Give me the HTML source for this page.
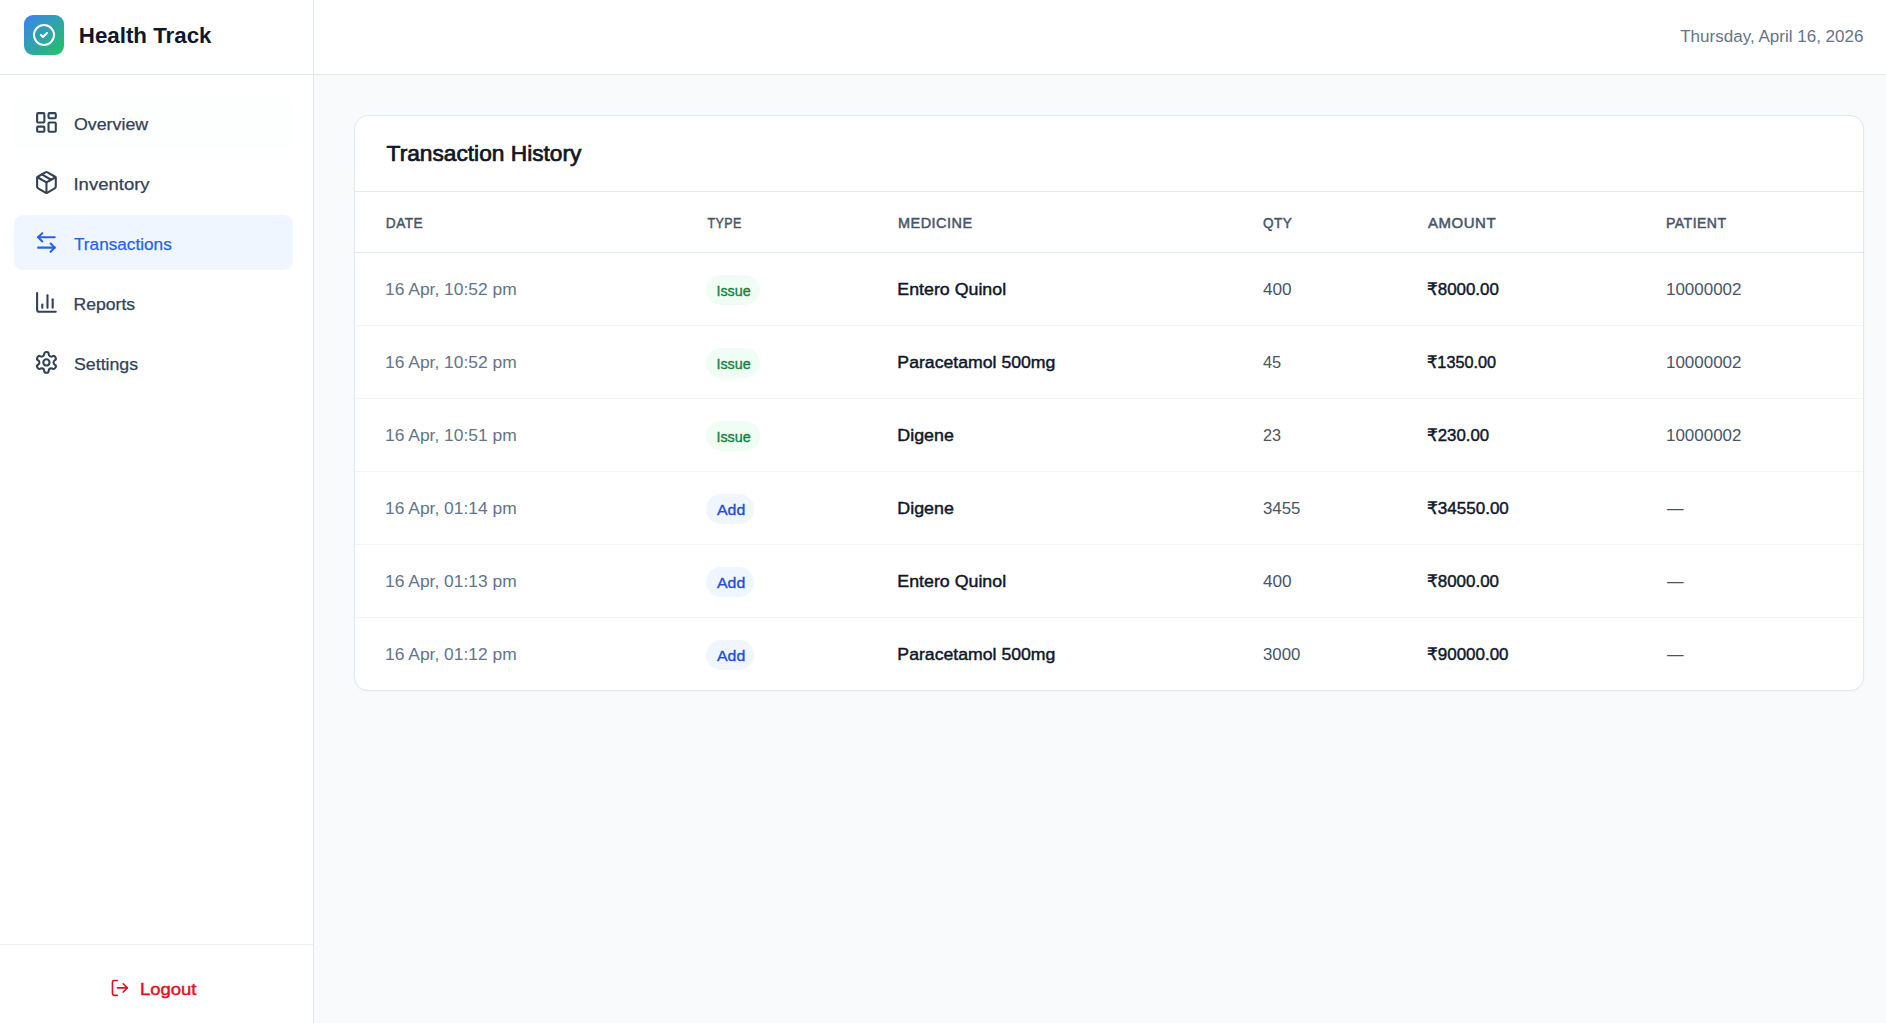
<!DOCTYPE html>
<html lang="en">
<head>
<meta charset="utf-8">
<title>Health Track</title>
<style>
*{box-sizing:border-box;margin:0;padding:0}
html,body{width:1886px;height:1023px;overflow:hidden}
body{font-family:"Liberation Sans","DejaVu Sans",sans-serif;background:#f8fafc;color:#0f172a;position:relative}
.t{display:inline-block;position:relative;white-space:nowrap;transform-origin:0 50%}
.sidebar{position:absolute;left:0;top:0;width:314px;height:1023px;background:#fff;border-right:1px solid #e2e8f0}
.brand{position:absolute;left:0;top:0;width:313px;height:75px;border-bottom:1px solid #e2e8f0}
.logo{position:absolute;left:24px;top:15px;width:40px;height:40px;border-radius:9px;background:linear-gradient(135deg,#3b82f6 0%,#22c55e 100%)}
.logo svg{position:absolute;left:8px;top:8px;width:24px;height:24px;color:#fff}
.brand-name{position:absolute;left:80px;top:15px;height:40px;line-height:40px;font-size:22.4px;font-weight:700;color:#0f172a;white-space:nowrap}
.nav-item{position:absolute;left:14px;width:279px;height:54px;border-radius:9px;color:#334155}
.nav-item svg{position:absolute;left:20.4px;top:14.4px;width:24.9px;height:24.9px}
.nav-item .lbl{position:absolute;left:60px;top:0;height:54px;line-height:54px;font-size:17.2px;white-space:nowrap;-webkit-text-stroke:0.25px currentColor}
.nav-item.hov{background:#fdfefe}
.nav-item.active{background:#eff6ff;color:#2563eb}
.logout-wrap{position:absolute;left:0;top:944px;width:313px;height:79px;border-top:1px solid #eceef2}
.logout{position:absolute;left:110.4px;top:33px;height:24px;color:#e3101f}
.logout svg{position:absolute;left:0;top:-0.3px;width:19.8px;height:19.8px}
.logout .lbl{position:absolute;left:29.9px;top:0;line-height:22px;font-size:17.2px;white-space:nowrap;-webkit-text-stroke:0.45px currentColor}
.topbar{position:absolute;left:314px;top:0;width:1572px;height:75px;background:#fff;border-bottom:1px solid #e2e8f0}
.today{position:absolute;right:22px;top:0;height:72px;line-height:72px;font-size:17.2px;color:#64748b;white-space:nowrap}
.card{position:absolute;left:354px;top:115px;width:1510px;height:576px;background:#fff;border:1px solid #e3e7ee;border-radius:14px;overflow:hidden;box-shadow:0 1px 2px rgba(15,23,42,.03)}
.card-head{height:76px;border-bottom:1px solid #e2e8f0;padding-left:30px;line-height:76px;font-size:21.5px;font-weight:400;-webkit-text-stroke:0.7px currentColor;color:#0f172a;white-space:nowrap}
table{border-collapse:separate;border-spacing:0;width:1508px;table-layout:fixed}
th{height:61px;text-align:left;padding-left:30px;font-size:15px;font-weight:400;-webkit-text-stroke:0.5px currentColor;color:#475569;border-bottom:1px solid #e2e8f0;text-transform:uppercase;white-space:nowrap;letter-spacing:.5px}
td{height:73px;padding-left:30px;font-size:17.2px;border-bottom:1px solid #f1f5f9;white-space:nowrap}
tr:last-child td{border-bottom:1px solid transparent}
td.d{color:#64748b}
td.q,td.p{color:#475569}
td.m,td.a{font-weight:400;color:#0f172a;-webkit-text-stroke:0.45px currentColor}
.badge{display:inline-block;height:30px;line-height:30px;border-radius:15px;padding:0 0 0 11px;width:54.2px;font-size:15px;font-weight:400;-webkit-text-stroke:0.35px currentColor;position:relative;top:1px}
.issue{background:#f0fdf4;color:#15803d}
.add{background:#eff6ff;color:#1d4ed8;width:47.6px}
</style>
</head>
<body>
<div class="sidebar">
  <div class="brand"><div class="logo"><svg viewBox="0 0 24 24" fill="none" stroke="currentColor" stroke-width="2" stroke-linecap="round" stroke-linejoin="round"><circle cx="12" cy="12" r="10"/><path d="m9 12 2 2 4-4"/></svg></div><div class="brand-name"><span class="t" id="brand" style="transform:translate(-1.17px,0.60px) scaleX(0.9962)">Health Track</span></div></div>
  <div class="nav-item hov" style="top:96px"><svg viewBox="0 0 24 24" fill="none" stroke="currentColor" stroke-width="2" stroke-linecap="round" stroke-linejoin="round"><rect width="7" height="9" x="3" y="3" rx="1"/><rect width="7" height="5" x="14" y="3" rx="1"/><rect width="7" height="9" x="14" y="12" rx="1"/><rect width="7" height="5" x="3" y="16" rx="1"/></svg><span class="lbl" style=""><span class="t" id="nav-overview" style="transform:translate(0.00px,1.00px) scaleX(1.0347)">Overview</span></span></div>
  <div class="nav-item" style="top:156px"><svg viewBox="0 0 24 24" fill="none" stroke="currentColor" stroke-width="2" stroke-linecap="round" stroke-linejoin="round"><path d="m7.5 4.27 9 5.15"/><path d="M21 8a2 2 0 0 0-1-1.73l-7-4a2 2 0 0 0-2 0l-7 4A2 2 0 0 0 3 8v8a2 2 0 0 0 1 1.73l7 4a2 2 0 0 0 2 0l7-4A2 2 0 0 0 21 16Z"/><path d="m3.3 7 8.7 5 8.7-5"/><path d="M12 22V12"/></svg><span class="lbl" style=""><span class="t" id="nav-inventory" style="transform:translate(-0.54px,0.92px) scaleX(1.0773)">Inventory</span></span></div>
  <div class="nav-item active" style="top:215px;height:55px"><svg viewBox="0 0 24 24" fill="none" stroke="currentColor" stroke-width="2" stroke-linecap="round" stroke-linejoin="round" style='top:15.4px'><path d="M8 3 4 7l4 4"/><path d="M4 7h16"/><path d="m16 21 4-4-4-4"/><path d="M20 17H4"/></svg><span class="lbl" style="top:1px;"><span class="t" id="nav-transactions" style="transform:translate(0.00px,0.97px) scaleX(1.0000)">Transactions</span></span></div>
  <div class="nav-item" style="top:276px"><svg viewBox="0 0 24 24" fill="none" stroke="currentColor" stroke-width="2" stroke-linecap="round" stroke-linejoin="round"><path d="M3 3v16a2 2 0 0 0 2 2h16"/><path d="M18 17V9"/><path d="M13 17V5"/><path d="M8 17v-3"/></svg><span class="lbl" style=""><span class="t" id="nav-reports" style="transform:translate(-0.54px,0.98px) scaleX(1.0239)">Reports</span></span></div>
  <div class="nav-item" style="top:336px"><svg viewBox="0 0 24 24" fill="none" stroke="currentColor" stroke-width="2" stroke-linecap="round" stroke-linejoin="round"><path d="M12.22 2h-.44a2 2 0 0 0-2 2v.18a2 2 0 0 1-1 1.73l-.43.25a2 2 0 0 1-2 0l-.15-.08a2 2 0 0 0-2.73.73l-.22.38a2 2 0 0 0 .73 2.73l.15.1a2 2 0 0 1 1 1.72v.51a2 2 0 0 1-1 1.74l-.15.09a2 2 0 0 0-.73 2.73l.22.38a2 2 0 0 0 2.73.73l.15-.08a2 2 0 0 1 2 0l.43.25a2 2 0 0 1 1 1.73V20a2 2 0 0 0 2 2h.44a2 2 0 0 0 2-2v-.18a2 2 0 0 1 1-1.73l.43-.25a2 2 0 0 1 2 0l.15.08a2 2 0 0 0 2.73-.73l.22-.39a2 2 0 0 0-.73-2.73l-.15-.08a2 2 0 0 1-1-1.74v-.5a2 2 0 0 1 1-1.74l.15-.09a2 2 0 0 0 .73-2.73l-.22-.38a2 2 0 0 0-2.73-.73l-.15.08a2 2 0 0 1-2 0l-.43-.25a2 2 0 0 1-1-1.73V4a2 2 0 0 0-2-2z"/><circle cx="12" cy="12" r="3"/></svg><span class="lbl" style=""><span class="t" id="nav-settings" style="transform:translate(0.00px,1.01px) scaleX(1.0323)">Settings</span></span></div>
  <div class="logout-wrap"><div class="logout"><svg viewBox="0 0 24 24" fill="none" stroke="currentColor" stroke-width="2" stroke-linecap="round" stroke-linejoin="round"><path d="M9 21H5a2 2 0 0 1-2-2V5a2 2 0 0 1 2-2h4"/><polyline points="16 17 21 12 16 7"/><line x1="21" x2="9" y1="12" y2="12"/></svg><span class="lbl"><span class="t" id="logout" style="transform:translate(0.00px,-0.12px) scaleX(1.0731)">Logout</span></span></div></div>
</div>
<div class="topbar"><div class="today"><span class="t" id="today" style="transform-origin:100% 50%;transform:translate(-0.54px,-0.50px) scaleX(0.9908)">Thursday, April 16, 2026</span></div></div>
<div class="card">
  <div class="card-head"><span class="t" id="title" style="transform:translate(1.62px,0.42px) scaleX(1.0562)">Transaction History</span></div>
  <table>
    <colgroup><col style="width:321px"><col style="width:192px"><col style="width:365px"><col style="width:164px"><col style="width:239px"><col style="width:227px"></colgroup>
    <thead><tr><th><span class="t" id="th-date" style="transform:translate(0.81px,-0.30px) scaleX(0.9125)">Date</span></th><th><span class="t" id="th-type" style="transform:translate(1.44px,-0.30px) scaleX(0.8306)">Type</span></th><th><span class="t" id="th-medicine" style="transform:translate(0.00px,-0.30px) scaleX(0.9636)">Medicine</span></th><th><span class="t" id="th-qty" style="transform:translate(0.00px,-0.30px) scaleX(0.9031)">Qty</span></th><th><span class="t" id="th-amount" style="transform:translate(1.08px,-0.30px) scaleX(1.0000)">Amount</span></th><th><span class="t" id="th-patient" style="transform:translate(0.00px,-0.30px) scaleX(0.9369)">Patient</span></th></tr></thead>
    <tbody>
      <tr><td class="d"><span class="t" id="d0" style="transform:translate(0.00px,0.37px) scaleX(1.0140)">16 Apr, 10:52 pm</span></td><td><span class="badge issue"><span class="t" id="b0" style="transform:translate(-0.54px,0.90px) scaleX(0.9552)">Issue</span></span></td><td class="m"><span class="t" id="m0" style="transform:translate(-0.63px,0.37px) scaleX(1.0344)">Entero Quinol</span></td><td class="q"><span class="t" id="q0" style="transform:translate(0.00px,0.37px) scaleX(1.0000)">400</span></td><td class="a"><span class="t" id="a0" style="transform:translate(0.00px,0.37px) scaleX(0.9836)">₹8000.00</span></td><td class="p"><span class="t" id="p0" style="transform:translate(0.00px,0.37px) scaleX(0.9867)">10000002</span></td></tr>
      <tr><td class="d"><span class="t" id="d1" style="transform:translate(0.00px,0.37px) scaleX(1.0140)">16 Apr, 10:52 pm</span></td><td><span class="badge issue"><span class="t" id="b1" style="transform:translate(-0.54px,0.90px) scaleX(0.9552)">Issue</span></span></td><td class="m"><span class="t" id="m1" style="transform:translate(-0.63px,0.37px) scaleX(1.0273)">Paracetamol 500mg</span></td><td class="q"><span class="t" id="q1" style="transform:translate(0.00px,0.37px) scaleX(0.9526)">45</span></td><td class="a"><span class="t" id="a1" style="transform:translate(0.00px,0.37px) scaleX(0.9466)">₹1350.00</span></td><td class="p"><span class="t" id="p1" style="transform:translate(0.00px,0.37px) scaleX(0.9867)">10000002</span></td></tr>
      <tr><td class="d"><span class="t" id="d2" style="transform:translate(0.00px,0.37px) scaleX(1.0140)">16 Apr, 10:51 pm</span></td><td><span class="badge issue"><span class="t" id="b2" style="transform:translate(-0.54px,0.90px) scaleX(0.9552)">Issue</span></span></td><td class="m"><span class="t" id="m2" style="transform:translate(-0.63px,0.37px) scaleX(1.0367)">Digene</span></td><td class="q"><span class="t" id="q2" style="transform:translate(0.00px,0.37px) scaleX(0.9421)">23</span></td><td class="a"><span class="t" id="a2" style="transform:translate(0.00px,0.37px) scaleX(0.9783)">₹230.00</span></td><td class="p"><span class="t" id="p2" style="transform:translate(0.00px,0.37px) scaleX(0.9867)">10000002</span></td></tr>
      <tr><td class="d"><span class="t" id="d3" style="transform:translate(0.00px,0.37px) scaleX(1.0140)">16 Apr, 01:14 pm</span></td><td><span class="badge add"><span class="t" id="b3" style="transform:translate(0.00px,0.90px) scaleX(1.0577)">Add</span></span></td><td class="m"><span class="t" id="m3" style="transform:translate(-0.63px,0.37px) scaleX(1.0367)">Digene</span></td><td class="q"><span class="t" id="q3" style="transform:translate(0.00px,0.37px) scaleX(0.9789)">3455</span></td><td class="a"><span class="t" id="a3" style="transform:translate(0.00px,0.37px) scaleX(0.9904)">₹34550.00</span></td><td class="p"><span class="t" id="p3" style="transform:translate(0.90px,0.37px) scaleX(0.9579)">—</span></td></tr>
      <tr><td class="d"><span class="t" id="d4" style="transform:translate(0.00px,0.37px) scaleX(1.0140)">16 Apr, 01:13 pm</span></td><td><span class="badge add"><span class="t" id="b4" style="transform:translate(0.00px,0.90px) scaleX(1.0577)">Add</span></span></td><td class="m"><span class="t" id="m4" style="transform:translate(-0.63px,0.37px) scaleX(1.0344)">Entero Quinol</span></td><td class="q"><span class="t" id="q4" style="transform:translate(0.00px,0.37px) scaleX(1.0000)">400</span></td><td class="a"><span class="t" id="a4" style="transform:translate(0.00px,0.37px) scaleX(0.9849)">₹8000.00</span></td><td class="p"><span class="t" id="p4" style="transform:translate(0.90px,0.37px) scaleX(0.9579)">—</span></td></tr>
      <tr><td class="d"><span class="t" id="d5" style="transform:translate(0.00px,0.37px) scaleX(1.0140)">16 Apr, 01:12 pm</span></td><td><span class="badge add"><span class="t" id="b5" style="transform:translate(0.00px,0.90px) scaleX(1.0577)">Add</span></span></td><td class="m"><span class="t" id="m5" style="transform:translate(-0.63px,0.37px) scaleX(1.0273)">Paracetamol 500mg</span></td><td class="q"><span class="t" id="q5" style="transform:translate(0.00px,0.37px) scaleX(0.9789)">3000</span></td><td class="a"><span class="t" id="a5" style="transform:translate(0.00px,0.37px) scaleX(0.9867)">₹90000.00</span></td><td class="p"><span class="t" id="p5" style="transform:translate(0.90px,0.37px) scaleX(0.9579)">—</span></td></tr>
    </tbody>
  </table>
</div>
</body>
</html>
